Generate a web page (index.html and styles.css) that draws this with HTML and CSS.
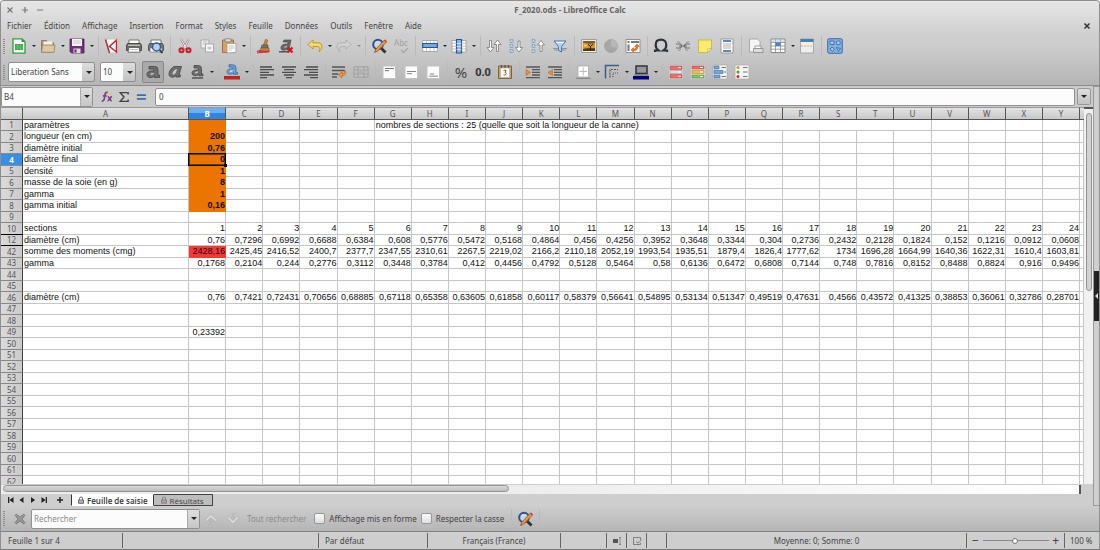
FILE: index.html
```html
<!DOCTYPE html>
<html lang="fr">
<head>
<meta charset="utf-8">
<title>F_2020.ods - LibreOffice Calc</title>
<link rel="stylesheet" href="styles.css">
</head>
<body>
<div class="window">
  <header class="chrome">
    <div class="titlebar">
      <div class="winbtns">
        <button aria-label="Fermer la fenêtre"><svg viewBox="0 0 8 8"><path d="M1.500 1.500l5 5M6.500 1.500l-5 5"/></svg></button>
        <button aria-label="Agrandir"><svg viewBox="0 0 8 8"><path d="M4 1v6M1 4h6"/></svg></button>
        <button aria-label="Réduire"><svg viewBox="0 0 8 8"><path d="M1 4h6"/></svg></button>
      </div>
      <h1>F_2020.ods - LibreOffice Calc</h1>
    </div>
    <nav class="menubar">
      <button>Fichier</button><button>Édition</button><button>Affichage</button><button>Insertion</button><button>Format</button><button>Styles</button><button>Feuille</button><button>Données</button><button>Outils</button><button>Fenêtre</button><button>Aide</button>
      <button class="closedoc" aria-label="Fermer le document"><svg viewBox="0 0 8 8"><path d="M1.500 1.500l5 5M6.500 1.500l-5 5"/></svg></button>
    </nav>

    <div class="toolbar standard">
      <div class="grip"></div>
      <button class="tb" aria-label="Nouveau"><svg viewBox="0 0 16 16"><path d="M2 .8h9l3 3v11.400H2z" fill="#fff" stroke="#2f9a3c" stroke-width="1.300"/><path d="M10.500 1l3.500 3h-3.500z" fill="#2f9a3c"/><path d="M4 6h8v6H4z" fill="#35a844"/><path d="M4 8h8M4 10h8M6.700 6v6M9.400 6v6" stroke="#8fd796" stroke-width=".5"/></svg></button><button class="dd" aria-label="Nouveau : options"></button>
      <button class="tb" aria-label="Ouvrir"><svg viewBox="0 0 16 16"><path d="M1.500 14V2.500h5l1 2h6V14z" fill="#b09a78" stroke="#87704e" stroke-width=".8"/><path d="M3.500 3.500h9v4h-9z" fill="#f2f2ee"/><path d="M1.500 14.300l1-7.300h12.500l-1 7.300z" fill="#dbc9a6" stroke="#957d59" stroke-width=".8"/></svg></button><button class="dd" aria-label="Ouvrir : options"></button>
      <button class="tb" aria-label="Enregistrer"><svg viewBox="0 0 16 16"><path d="M1 1h14v14H2.500L1 13.500z" fill="#70307c" stroke="#4b1b58" stroke-width=".8"/><path d="M3 1h10v7H3z" fill="#f5f3f5"/><path d="M4 3h8M4 5h8" stroke="#bbb" stroke-width=".7"/><path d="M4.500 10.500h7V15h-7z" fill="#ddd"/><path d="M5.500 11.500h2v3h-2z" fill="#5d2769"/></svg></button><button class="dd" aria-label="Enregistrer : options"></button>
      <span class="sep"></span>
      <button class="tb" aria-label="Exporter au format PDF"><svg viewBox="0 0 16 16"><path d="M2 1h12v14H4z" fill="#fafafa" stroke="#bbb" stroke-width=".8"/><path d="M1.500 1.500L5.500 15M13 1.500L5.500 8.500l7 5.500V3" fill="none" stroke="#c8282d" stroke-width="1.500"/></svg></button>
      <button class="tb" aria-label="Imprimer"><svg viewBox="0 0 16 16"><path d="M3 2h10v4H3z" fill="#fff" stroke="#555" stroke-width=".8"/><path d="M1.500 5.500h13l1 2v5h-15v-5z" fill="#686b66" stroke="#363834" stroke-width=".8"/><path d="M2 7.200h12" stroke="#dfe5d8" stroke-width="1"/><path d="M3 9.500h10l1 4.700H2z" fill="#fff" stroke="#555" stroke-width=".8"/><path d="M4 11.500h8" stroke="#bbb"/></svg></button>
      <button class="tb" aria-label="Aperçu"><svg viewBox="0 0 16 16"><path d="M3 2h10v4H3z" fill="#fff" stroke="#555" stroke-width=".8"/><path d="M1.500 5.500h13l1 2v5h-15v-5z" fill="#747873" stroke="#444" stroke-width=".8"/><path d="M2 10h12v4H2z" fill="#fff" stroke="#666" stroke-width=".6"/><path d="M11.500 12l3 3" stroke="#363a3d" stroke-width="2"/><circle cx="8.500" cy="9" r="4" fill="#b5d0f2" stroke="#315da2" stroke-width="1.500"/></svg></button>
      <span class="sep"></span>
      <button class="tb" aria-label="Couper"><svg viewBox="0 0 16 16"><path d="M4 1l5.500 10M12 1L6.500 11" stroke="#888" stroke-width="2.200"/><path d="M4 1l5.500 10M12 1L6.500 11" stroke="#eee" stroke-width="1"/><circle cx="4.500" cy="12.300" r="2.100" fill="#e99" stroke="#cb1c24" stroke-width="1.900"/><circle cx="11.500" cy="12.300" r="2.100" fill="#e99" stroke="#cb1c24" stroke-width="1.900"/></svg></button>
      <button class="tb" aria-label="Copier"><svg viewBox="0 0 16 16"><path d="M2 2h8v8H2z" fill="#eee" stroke="#aaa"/><path d="M4 4h4M4 6h4" stroke="#bbb"/><path d="M6.500 6h8v8h-8z" fill="#fbfbfb" stroke="#a5a5a5"/><path d="M8.500 8.500h4v3h-4z" fill="#ccc"/></svg></button>
      <button class="tb" aria-label="Coller"><svg viewBox="0 0 16 16"><path d="M1.500 2h11v12.500h-11z" fill="#d7a25e" stroke="#987147"/><path d="M4 .8h6v3H4z" fill="#ddd" stroke="#777" stroke-width=".7"/><path d="M6 5.500h9v9l-9 .5z" fill="#fafafa" stroke="#999" stroke-width=".8"/><path d="M7.500 8h6M7.500 10h6M7.500 12h3" stroke="#bbb" stroke-width=".8"/></svg></button><button class="dd" aria-label="Coller : options"></button>
      <span class="sep"></span>
      <button class="tb" aria-label="Cloner le formatage"><svg viewBox="0 0 16 16"><path d="M9.500 1.500l2 .5-1 5h-3z" fill="#d48b45" stroke="#8a5729" stroke-width=".7"/><path d="M6 7h6v3H5z" fill="#777" stroke="#444" stroke-width=".6"/><path d="M5 10h8v3l-3 1H3z" fill="#c6833f" stroke="#85502a" stroke-width=".6"/><path d="M1 13.500c4-2 5 1 13-.5M1 15c5-1 7-1 12-1" fill="none" stroke="#d42d2a" stroke-width="1.200"/></svg></button>
      <button class="tb" aria-label="Effacer le formatage"><svg viewBox="0 0 16 16"><path d="M6 2h7l-2 10H9l.3-1.500C7 13.500 2 12.500 3 9c.5-2.500 3.500-3 6.700-3l.3-2H5z" fill="#686868" stroke="#444" stroke-width=".6"/><path d="M5.500 9.500l3.500-2-.5 2z" fill="#ccc"/><path d="M1 13.800h9" stroke="#555" stroke-width="1.500"/><path d="M9.500 9.500l5 5M14.500 9.500l-5 5" stroke="#c91c21" stroke-width="2.400"/></svg></button>
      <span class="sep"></span>
      <button class="tb" aria-label="Annuler"><svg viewBox="0 0 16 16"><path d="M.8 6.500L6 2v2.800h5c5.500 0 4.500 6.500 1 9 1.300-3.800.5-5.300-2-5.300H6V11z" fill="#f5db65" stroke="#b89421" stroke-width=".9"/></svg></button><button class="dd" aria-label="Annuler : options"></button>
      <button class="tb" aria-label="Rétablir" disabled><svg viewBox="0 0 16 16"><path d="M15.200 6.500L10 2v2.800H5c-5.500 0-4.500 6.500-1 9-1.300-3.800-.5-5.300 2-5.300h4V11z" fill="#d3d3d3" stroke="#aaa" stroke-width=".8"/></svg></button><button class="dd off" aria-label="Rétablir : options" disabled></button>
      <span class="sep"></span>
      <button class="tb" aria-label="Rechercher et remplacer"><svg viewBox="0 0 16 16"><circle cx="7" cy="6.500" r="4.800" fill="#c8d6e8" stroke="#2f4f8f" stroke-width="2"/><path d="M10.500 10.500l4 4" stroke="#333" stroke-width="2.800"/><path d="M3.500 14.500l1.300-3.300L13.500 2l2 2-9 9.200z" fill="#ee9a3c" stroke="#8f4c1b" stroke-width=".8"/><path d="M13 2.500l1-1.300 2 2-1 1.200z" fill="#cc474a"/></svg></button>
      <button class="tb abc" aria-label="Orthographe" disabled><span>Abc</span><svg viewBox="0 0 16 7"><path d="M8 3l2.500 2.500L15 1" fill="none" stroke="#aaa" stroke-width="1.500"/></svg></button>
      <span class="sep"></span>
      <button class="tb" aria-label="Ligne"><svg viewBox="0 0 16 16"><path d="M.7 2.500h14.600v11H.7z" fill="#fff" stroke="#999" stroke-width=".8"/><path d="M4.500 2.500v11M8.200 2.500v11M12 2.500v11" stroke="#aaa" stroke-width=".7"/><path d="M.7 5.500h14.600v4H.7z" fill="#78a8df" stroke="#245794" stroke-width="1.200"/></svg></button><button class="dd" aria-label="Ligne : options"></button>
      <button class="tb" aria-label="Colonne"><svg viewBox="0 0 16 16"><path d="M1 2.500h14v11.500H1z" fill="#fff" stroke="#999" stroke-width=".8"/><path d="M1 5.300h14M1 8.200h14M1 11h14" stroke="#aaa" stroke-width=".7"/><path d="M5.500 1.500h5v13.500h-5z" fill="#8db8e9" stroke="#245794" stroke-width="1.200"/><path d="M5.500 5.500h5M5.500 8.500h5M5.500 11.500h5" stroke="#fff" stroke-width=".6"/></svg></button><button class="dd" aria-label="Colonne : options"></button>
      <span class="sep"></span>
      <button class="tb" aria-label="Trier"><svg viewBox="0 0 16 16"><path d="M3.500 2.500h2v7h2.300L4.500 14 1 9.500h2.500zM10.500 13.500h2v-7H15L11.500 2 8 6.500h2.500z" fill="#fff" stroke="#777" stroke-width=".8"/></svg></button>
      <button class="tb" aria-label="Tri croissant"><svg viewBox="0 0 16 16"><path d="M10 3h2v6.500h2.500L11 14 7.500 9.500H10z" fill="#fff" stroke="#777" stroke-width=".8"/><path d="M2 1.500h3v3H2zM2 6.500h3v3H2zM2 11.500h3v3H2z" fill="#b9cfe6" stroke="#5e85b0" stroke-width=".8" stroke-dasharray="1 .7"/></svg></button>
      <button class="tb" aria-label="Tri décroissant"><svg viewBox="0 0 16 16"><path d="M10 13.500h2V7h2.500L11 2.500 7.500 7H10z" fill="#fff" stroke="#777" stroke-width=".8"/><path d="M2 1.500h3v3H2zM2 6.500h3v3H2zM2 11.500h3v3H2z" fill="#b9cfe6" stroke="#5e85b0" stroke-width=".8" stroke-dasharray="1 .7"/></svg></button>
      <button class="tb" aria-label="AutoFiltre"><svg viewBox="0 0 16 16"><path d="M1 10.500h14M2 12h12" stroke="#888" stroke-width=".8"/><path d="M2 3h12L9.500 8.500V14l-3-1.500v-4z" fill="#b6d2f1" stroke="#4677b0"/><path d="M4 4.300h8" stroke="#fff"/></svg></button>
      <span class="sep"></span>
      <button class="tb" aria-label="Image"><svg viewBox="0 0 16 16"><path d="M.7 1.500h14.600v13H.7z" fill="#eee" stroke="#8c8c86" stroke-width=".8"/><path d="M2 3h12v10H2z" fill="#d9982f"/><path d="M2 3h12v2l-5 1L2 4.500z" fill="#7d5d26"/><path d="M2 11c4-1.500 7 0 12-1V13H2z" fill="#4a3a18"/><path d="M9.500 12V8.500L7 6.500m2.500 2L12 6" fill="none" stroke="#2b2009" stroke-width="1"/><path d="M3 7.500h3" stroke="#f9d869" stroke-width="1.500"/></svg></button>
      <button class="tb" aria-label="Diagramme" disabled><svg viewBox="0 0 16 16"><circle cx="8" cy="8" r="6.500" fill="#a7a7a7" stroke="#999" stroke-width=".6"/><path d="M8 8V1.500A6.500 6.500 0 0 1 14 10z" fill="#b8b8b8"/></svg></button>
      <button class="tb" aria-label="Table dynamique"><svg viewBox="0 0 16 16"><path d="M1 1.500h14v13H1z" fill="#fff" stroke="#888" stroke-width=".9"/><path d="M2.500 3h2v2h-2zM6 3h8v2H6zM2.500 6.500h2V13h-2z" fill="#777"/><path d="M12 6l2.500 2.500h-1.700c0 3-1.300 4.200-4.300 4.300v1.500L6 12l2.500-2.500V11c2 0 2.500-.7 2.500-2.500H9.500z" fill="#ee7624" stroke="#b85316" stroke-width=".5"/></svg></button>
      <span class="sep"></span>
      <button class="tb" aria-label="Caractères spéciaux"><svg viewBox="0 0 16 16"><path d="M2 14v-1.500h3.500C3.500 11 2.700 9.300 2.700 7c0-3.500 2-5.300 5.300-5.300s5.300 1.800 5.300 5.300c0 2.300-.8 4-2.800 5.500H14V14" fill="none" stroke="#2e3436" stroke-width="2.200"/></svg></button>
      <button class="tb" aria-label="Hyperlien"><svg viewBox="0 0 16 16"><path d="M1 6h4.500l1.500 2-1.500 2H1M15 6h-4.500L9 8l1.500 2H15M4 8h8" fill="none" stroke="#6c6c6c" stroke-width="1.200"/><path d="M2 3.500l3 1M14 3.500l-3 1M3 12.500l3-1M13 12.500l-3-1" fill="none" stroke="#888" stroke-width=".8"/></svg></button>
      <button class="tb" aria-label="Annotation"><svg viewBox="0 0 16 16"><path d="M1.500 2h13v9l-4 3.500h-9z" fill="#f7ec6b" stroke="#c2b43a" stroke-width=".8"/><path d="M10.500 14.500l.3-3.700 3.700.2z" fill="#fffbd0" stroke="#b3a334" stroke-width=".6"/></svg></button>
      <button class="tb" aria-label="En-tête et pied de page"><svg viewBox="0 0 16 16"><path d="M2 1h12v14H2z" fill="#fff" stroke="#888" stroke-width=".8"/><path d="M4 3h8M4 13h8" stroke="#315f9b" stroke-width="1.700"/><path d="M4 6h8M4 8h8M4 10h8" stroke="#999" stroke-width=".8"/></svg></button>
      <span class="sep"></span>
      <button class="tb" aria-label="Zones d'impression"><svg viewBox="0 0 16 16"><path d="M1.500 1h8l2.500 2.500V14H1.500z" fill="#f5f5f5" stroke="#999" stroke-width=".8"/><path d="M7 8h6v3H7z" fill="#fff" stroke="#888" stroke-width=".8"/><path d="M5.500 10.500h9.500v4H5.500z" fill="#ddd" stroke="#888" stroke-width=".8"/></svg></button>
      <button class="tb" aria-label="Fixer lignes et colonnes"><svg viewBox="0 0 16 16"><path d="M1 1h14v13.500H1z" fill="#fff" stroke="#888"/><path d="M1 4.500h14M1 8h14M1 11.200h14M5.500 1v13.500M10.500 1v13.500" stroke="#888" stroke-width=".8"/><path d="M5.500 4.500h5V8h-5z" fill="#4f83bd"/><path d="M1.500 1.500h13v2.500h-13z" fill="#b8cde2" opacity=".6"/></svg></button><button class="dd" aria-label="Fixer : options"></button>
      <button class="tb" aria-label="Scinder la fenêtre"><svg viewBox="0 0 16 16"><path d="M1.500 1h13v14h-13z" fill="#eee" stroke="#999" stroke-width=".8"/><path d="M1.500 1h13v3h-13z" fill="#467eb5"/><path d="M2 8h12" stroke="#e9a65e" stroke-width="1.200" stroke-dasharray="2 1"/></svg></button>
      <span class="sep"></span>
      <button class="tb" aria-label="Fonctions de dessin"><svg viewBox="0 0 16 16"><rect x=".7" y=".7" width="14.600" height="14.600" rx="1.500" fill="#82aee0" stroke="#3c6da8"/><path d="M3 3h4v3.500H3zM9.500 9.500l4 1-2 3zM3 11l2-2 2.500 2L5.500 13.500z" fill="#a9c8eb" stroke="#315f9b" stroke-width=".8"/><circle cx="11.300" cy="4.800" r="2" fill="#a9c8eb" stroke="#315f9b" stroke-width=".8"/></svg></button>
    </div>

    <div class="toolbar formatting">
      <div class="grip"></div>
      <div class="combo fontname"><select aria-label="Nom de police"><option>Liberation Sans</option></select></div>
      <div class="combo fontsize"><select aria-label="Taille de police"><option>10</option></select></div>
      <span class="sep"></span>
      <button class="tb pressed" aria-label="Gras" aria-pressed="true"><svg viewBox="0 0 16 16"><path d="M4 2.500h5.500q3.500 0 3.500 3V11h1.500v2.500h-5V12C7 14.300 2 14 2 10.500 2 7.500 5 6.800 9 7c0-1.500-.5-2-2-2H4z" fill="#6d6d6d" stroke="#444" stroke-width=".8"/><path d="M5.500 10.300c0-1.300 1.500-1.500 3.500-1.300-.5 2-3.500 3-3.500 1.300z" fill="#bbb"/></svg></button>
      <button class="tb" aria-label="Italique"><svg viewBox="0 0 16 16"><path d="M7 2.500h7.500L12 11h1.500l-.5 2H9l.3-1.500C7 14 1.500 14 2 9.500 2.500 5 7 2.500 7 2.500z" fill="#6d6d6d" stroke="#444" stroke-width=".8"/><path d="M5.500 10c0-3 2.500-4.500 4.500-5C9.500 8 7.500 12 5.500 10z" fill="#c6c6c6"/></svg></button>
      <button class="tb" aria-label="Souligné"><svg viewBox="0 0 16 16"><path d="M5 1.500h4q3.500 0 3.500 3V10H14v1.800h-4V10.500C7 12.500 3 12 3 9c0-2.500 3-3 6.500-3 0-1.500-.5-2-2-2H5z" fill="#6d6d6d" stroke="#444" stroke-width=".8"/><path d="M5.800 8.800c0-1 1.500-1.300 3.700-1.200-.5 2-3.700 2.500-3.700 1.200z" fill="#c6c6c6"/><path d="M3 14h11" stroke="#555" stroke-width="1.600"/></svg></button><button class="dd" aria-label="Souligné : options"></button>
      <span class="sep"></span>
      <button class="tb" aria-label="Couleur de police"><svg viewBox="0 0 16 16"><path d="M5 .8h3.500q3.500 0 3.500 3V8.500h1.500v1.800h-4V9C7 11 3 10.500 3 7.700 3 5.300 6 4.800 9 4.800c0-1.300-.5-1.700-1.700-1.700H5z" fill="#71a0d7" stroke="#34639d" stroke-width=".8"/><path d="M5.700 7.300c0-1 1.500-1.200 3.300-1.100-.3 1.800-3.300 2.300-3.300 1.100z" fill="#cedaea"/><path d="M0 12h16v3.500H0z" fill="#c9211e"/></svg></button><button class="dd" aria-label="Couleur de police : options"></button>
      <span class="sep"></span>
      <button class="tb" aria-label="Aligner à gauche"><svg viewBox="0 0 16 16"><path d="M1 3h12M1 5.700h14M1 8.300h9M1 11h14M1 13.700h7" stroke="#4b4b4b" stroke-width="1.300"/></svg></button>
      <button class="tb" aria-label="Centrer"><svg viewBox="0 0 16 16"><path d="M1 3h14M3 5.700h10M1 8.300h14M3 11h10M5 13.700h6" stroke="#4b4b4b" stroke-width="1.300"/></svg></button>
      <button class="tb" aria-label="Aligner à droite"><svg viewBox="0 0 16 16"><path d="M3 3h12M1 5.700h14M6 8.300h9M1 11h14M7 13.700h8" stroke="#4b4b4b" stroke-width="1.300"/></svg></button>
      <span class="sep"></span>
      <button class="tb" aria-label="Renvoyer à la ligne"><svg viewBox="0 0 16 16"><path d="M1 3h13M1 6.500h13M1 10h6M1 13h5" stroke="#555" stroke-width="1.300"/><path d="M14 6.500c2 3 0 5-3 5v2.500L7 10.500 11 8v2c2 0 2.700-1.200 2-3z" fill="#ee9a4a" stroke="#bb6323" stroke-width=".7"/></svg></button>
      <button class="tb" aria-label="Fusionner les cellules" disabled><svg viewBox="0 0 16 16"><path d="M1 3h14v10H1zM1 6h14M1 10h14M5 3v3M11 3v3M5 10v3M11 10v3M3 8h10" fill="#c7c7c7" stroke="#999" stroke-width="1"/></svg></button>
      <span class="sep"></span>
      <button class="tb" aria-label="Aligner en haut"><svg viewBox="0 0 16 16"><rect x="2" y="2" width="12.500" height="12.500" rx="1" fill="#fcfcfc" stroke="#c2c2c2"/><path d="M4 4.500h9M4 6.700h4" stroke="#666" stroke-width=".9"/></svg></button>
      <button class="tb" aria-label="Centrer verticalement"><svg viewBox="0 0 16 16"><rect x="2" y="2" width="12.500" height="12.500" rx="1" fill="#fcfcfc" stroke="#c2c2c2"/><path d="M4 7.500h9M4 9.700h5" stroke="#777" stroke-width=".9"/></svg></button>
      <button class="tb" aria-label="Aligner en bas"><svg viewBox="0 0 16 16"><rect x="2" y="2" width="12.500" height="12.500" rx="1" fill="#fcfcfc" stroke="#c2c2c2"/><path d="M5 10h4M4 12.200h9" stroke="#777" stroke-width=".9"/></svg></button>
      <span class="sep"></span>
      <button class="tb percent">%</button>
      <button class="tb number">0.0</button>
      <button class="tb" aria-label="Format date"><svg viewBox="0 0 16 16"><path d="M1.500 2h13v12.500h-13z" fill="#c6a060" stroke="#846333"/><path d="M3.500 4h9v9.500h-9z" fill="#faf8f0" stroke="#aaa" stroke-width=".5"/><path d="M4.500 1v3M8 1v3M11.500 1v3" stroke="#555" stroke-width="1.200"/><path d="M6.500 6.300h2.700L8 8.500c2 0 1.700 2.800-1.500 2.500" fill="none" stroke="#666" stroke-width="1"/></svg></button>
      <span class="sep"></span>
      <button class="tb" aria-label="Augmenter le retrait"><svg viewBox="0 0 16 16"><path d="M1 3h14M7 5.700h8M7 8.300h8M7 11h8M1 13.700h14" stroke="#555" stroke-width="1.300"/><path d="M1 5.500l4.500 3L1 11.500z" fill="#ef8c3a" stroke="#b85c1c" stroke-width=".5"/></svg></button>
      <button class="tb" aria-label="Diminuer le retrait"><svg viewBox="0 0 16 16"><path d="M1 3h14M7 5.700h8M7 8.300h8M7 11h8M1 13.700h14" stroke="#555" stroke-width="1.300"/><path d="M5.500 5.500l-4.500 3 4.500 3z" fill="#ef8c3a" stroke="#b85c1c" stroke-width=".5"/></svg></button>
      <span class="sep"></span>
      <button class="tb" aria-label="Bordures"><svg viewBox="0 0 16 16"><path d="M3 2h10.500v11H3z" fill="#fff" stroke="#aaa" stroke-width=".8"/><path d="M8.200 3.500v8M4.500 7.500H12" stroke="#a9bfd8" stroke-width="1"/><path d="M1 14.300h14.500" stroke="#888" stroke-width="1.200"/></svg></button><button class="dd" aria-label="Bordures : options"></button>
      <button class="tb" aria-label="Style de bordure"><svg viewBox="0 0 16 16"><path d="M1.500 14.500V1.500H15" fill="none" stroke="#3e5f7d" stroke-width="1.500"/><path d="M6 13.500V5.500h8" fill="none" stroke="#555" stroke-width="1.200" stroke-dasharray="2 1"/><path d="M9 13V9h6" fill="none" stroke="#555" stroke-width="1" stroke-dasharray="1 1"/></svg></button><button class="dd" aria-label="Style de bordure : options"></button>
      <button class="tb" aria-label="Couleur de bordure"><svg viewBox="0 0 16 16"><path d="M3 2h11v7.500H3z" fill="#999" stroke="#333" stroke-width="1.500"/><path d="M1 11h14.500" stroke="#666"/><path d="M0 12h16v3.500H0z" fill="#000080"/></svg></button><button class="dd" aria-label="Couleur de bordure : options"></button>
      <span class="sep"></span>
      <button class="tb" aria-label="Condition"><svg viewBox="0 0 16 16"><path d="M1 1h14v14H1z" fill="#eee" stroke="#bbb" stroke-width=".7"/><path d="M2 2h12v3.500H2zM2 10.500h12V14H2z" fill="#ee6b6b" stroke="#c13d3d" stroke-width=".6"/><path d="M2 6.500h12v3H2z" fill="#ddd" stroke="#999" stroke-width=".6"/><path d="M10 3.700h3M10 8h3M10 12.300h3" stroke="#fff"/></svg></button>
      <button class="tb" aria-label="Échelle de couleurs"><svg viewBox="0 0 16 16"><path d="M1 1h14v14H1z" fill="#eee" stroke="#bbb" stroke-width=".7"/><path d="M2 2h12v3H2z" fill="#e6726b" stroke="#c13d3d" stroke-width=".6"/><path d="M2 6.500h12v3H2z" fill="#edbd53" stroke="#b78925" stroke-width=".6"/><path d="M2 11h12v3H2z" fill="#80c369" stroke="#4a8e34" stroke-width=".6"/><path d="M10 3.500h3M10 8h3M10 12.500h3" stroke="#fff"/></svg></button>
      <button class="tb" aria-label="Barre de données"><svg viewBox="0 0 16 16"><path d="M1 1h14v14H1z" fill="#f4f4f4" stroke="#aaa" stroke-width=".7"/><path d="M2 2h5v3H2zM2 6.500h9v3H2zM2 11h6v3H2z" fill="#77a4da" stroke="#3a6ba6" stroke-width=".6"/><path d="M9.500 3.500H14M12 8h2M9.500 12.500H14" stroke="#777" stroke-width="1.100"/></svg></button>
      <button class="tb" aria-label="Jeu d'icônes"><svg viewBox="0 0 16 16"><path d="M1 1h14v14H1z" fill="#f4f4f4" stroke="#aaa" stroke-width=".7"/><circle cx="4" cy="3.500" r="1.500" fill="#df952e"/><circle cx="4" cy="8" r="1.500" fill="#4d9b39"/><circle cx="4" cy="12.500" r="1.500" fill="#cd2a2a"/><path d="M9 3.500h4.500M9 8h4.500M9 12.500h4.500" stroke="#777" stroke-width="1.100"/></svg></button>
    </div>
  </header>

  <main class="work">
    <section class="document">
      <div class="formulabar">
        <div class="field namebox"><input aria-label="Zone de nom" value="B4"><button aria-label="Choisir un nom"></button></div>
        <button class="fb" aria-label="Assistant Fonctions"><svg viewBox="0 0 16 16"><path d="M9 2C6 1 5.500 3 5 7s-1 7-4 6M2.500 6.500h5M9 7.500c2 0 3 6 5.500 5.500M14.500 7.500c-2 0-3.500 6-6 5.500" fill="none" stroke="#7b4088" stroke-width="2.200"/><path d="M12 0l.8 2.200L15 3l-2.200.8L12 6l-.8-2.200L9 3l2.200-.8z" fill="#f2ca3b"/></svg></button>
        <button class="fb" aria-label="Somme"><svg viewBox="0 0 16 16"><path d="M13.500 4.500V2.200H3l5 5.800-5 5.800h10.500v-2.500" fill="none" stroke="#444" stroke-width="1.900"/></svg></button>
        <button class="fb" aria-label="Formule"><svg viewBox="0 0 16 16"><path d="M2.500 5.500h12M2.500 10.500h12" stroke="#3c6da8" stroke-width="2.600"/></svg></button>
        <input class="formula" aria-label="Ligne de saisie" value="0">
        <button class="expand" aria-label="Développer la barre de formule"></button>
      </div>
      <div class="sheetarea">
        <div class="sheet"><table class="grid" id="grid"></table></div>
        <div class="vscroll"><div class="vthumb"></div></div>
      </div>
      <div class="hscroll"><div class="htrack"><div class="hthumb"></div></div></div>
      <div class="tabs">
        <button class="nav" aria-label="Première feuille"><svg viewBox="0 0 8 8"><path d="M1 1h1.300v6H1zM6.500 1v6L2.500 4z"/></svg></button>
        <button class="nav" aria-label="Feuille précédente"><svg viewBox="0 0 8 8"><path d="M5.500 1v6L1.500 4z"/></svg></button>
        <button class="nav" aria-label="Feuille suivante"><svg viewBox="0 0 8 8"><path d="M2 1v6l4-3z"/></svg></button>
        <button class="nav" aria-label="Dernière feuille"><svg viewBox="0 0 8 8"><path d="M1.500 1v6l4-3zM5.700 1H7v6H5.700z"/></svg></button>
        <button class="nav add" aria-label="Ajouter une feuille"><svg viewBox="0 0 8 8"><path d="M3.300 1h1.400v2.300H7v1.400H4.700V7H3.300V4.700H1V3.300h2.300z"/></svg></button>
        <button class="tab active"><svg viewBox="0 0 8 8"><path d="M2.500 4V2.500a1.500 1.500 0 0 1 3 0V4M1.500 4h5v3.300h-5zM3 4.500V7M5 4.500V7" fill="none" stroke="#444" stroke-width=".8"/></svg>Feuille de saisie</button><button class="tab"><svg viewBox="0 0 8 8"><path d="M2.500 4V2.500a1.500 1.500 0 0 1 3 0V4M1.500 4h5v3.300h-5zM3 4.500V7M5 4.500V7" fill="none" stroke="#777" stroke-width=".8"/></svg>Résultats</button>
      </div>
    </section>
    <aside class="sidebar"><button aria-label="Afficher le volet latéral"></button></aside>
  </main>

  <div class="findbar">
    <div class="grip"></div>
    <button class="fclose" aria-label="Fermer la recherche"><svg viewBox="0 0 16 16"><path d="M3 1.500l5 4 5-4 1.500 1.500-4 5 4 5-1.500 1.500-5-4-5 4L1.500 13l4-5-4-5z" fill="#999" stroke="#666"/></svg></button>
    <div class="field search"><input aria-label="Rechercher" placeholder="Rechercher"><button aria-label="Historique"></button></div>
    <button class="arrow" aria-label="Précédent" disabled><svg viewBox="0 0 16 16"><path d="M8 3l6 6-1.500 1.500L8 6.500l-4.500 4L2 9zM7 9h2v1.500H7zM7 12h2v1.500H7z" fill="#dadada" stroke="#aaa" stroke-width=".6"/></svg></button>
    <button class="arrow" aria-label="Suivant" disabled><svg viewBox="0 0 16 16"><path d="M8 13L2 7l1.500-1.500L8 9.500l4.500-4L14 7zM7 5.500h2V7H7zM7 2.500h2V4H7z" fill="#dadada" stroke="#aaa" stroke-width=".6"/></svg></button>
    <button class="findall" disabled>Tout rechercher</button>
    <label class="check"><input type="checkbox">Affichage mis en forme</label>
    <label class="check"><input type="checkbox">Respecter la casse</label>
    <span class="sep"></span>
    <button class="tb" aria-label="Rechercher et remplacer"><svg viewBox="0 0 16 16"><circle cx="7" cy="6.500" r="4.800" fill="#c8d6e8" stroke="#2f4f8f" stroke-width="2"/><path d="M10.500 10.500l4 4" stroke="#333" stroke-width="2.800"/><path d="M3.500 14.500l1.300-3.300L13.500 2l2 2-9 9.200z" fill="#ee9a3c" stroke="#8f4c1b" stroke-width=".8"/><path d="M13 2.500l1-1.300 2 2-1 1.200z" fill="#cc474a"/></svg></button>
    <span class="sep"></span>
  </div>

  <footer class="status">
    <div class="s-sheet">Feuille 1 sur 4</div>
    <div class="s-sel"></div>
    <div class="s-style">Par défaut</div>
    <div class="s-lang">Français (France)</div>
    <div class="s-gap"></div>
    <div class="s-icon"><svg viewBox="0 0 10 10"><path d="M1 3h5v4H1z" fill="#555"/><path d="M7 1.500h2M8 1.500v7M7 8.500h2" stroke="#777" stroke-width=".8"/></svg></div>
    <div class="s-icon"><svg viewBox="0 0 10 10"><path d="M8.500 4V1.500h-7v7h7V7M4 5.500l2 1.500L9.500 4" fill="none" stroke="#777" stroke-width=".9"/></svg></div>
    <div class="s-icon"></div>
    <div class="s-sum">Moyenne: 0; Somme: 0</div>
    <div class="s-zoom"><button aria-label="Zoom arrière">−</button><input type="range" aria-label="Zoom" min="0" max="100" value="49"><button aria-label="Zoom avant">+</button></div>
    <div class="s-pct">100 %</div>
  </footer>
</div>
<script src="grid.js"></script>
</body>
</html>
```
FILE: grid.js
```js
const columns = 'ABCDEFGHIJKLMNOPQRSTUVWXY'.split('');
const rowNumbers = [1, 2, 3, 4, 5, 6, 7, 8, 9, 10, 12, 42];
for (let n = 43; n <= 62; n++) rowNumbers.push(n);

const labels = {
  1: 'paramètres', 2: 'longueur (en cm)', 3: 'diamètre initial', 4: 'diamètre final',
  5: 'densité', 6: 'masse de la soie (en g)', 7: 'gamma', 8: 'gamma initial',
  10: 'sections', 12: 'diamètre (cm)', 42: 'somme des moments (cmg)', 43: 'gamma', 46: 'diamètre (cm)'
};

const values = {
  2: ['200'], 3: ['0,76'], 4: ['0'], 5: ['1'], 6: ['8'], 7: ['1'], 8: ['0,16'],
  10: Array.from({ length: 24 }, (_, i) => String(i + 1)),
  12: '0,76 0,7296 0,6992 0,6688 0,6384 0,608 0,5776 0,5472 0,5168 0,4864 0,456 0,4256 0,3952 0,3648 0,3344 0,304 0,2736 0,2432 0,2128 0,1824 0,152 0,1216 0,0912 0,0608'.split(' '),
  42: '2428,16 2425,45 2416,52 2400,7 2377,7 2347,55 2310,61 2267,5 2219,02 2166,2 2110,18 2052,19 1993,54 1935,51 1879,4 1826,4 1777,62 1734 1696,28 1664,99 1640,36 1622,31 1610,4 1603,81'.split(' '),
  43: '0,1768 0,2104 0,244 0,2776 0,3112 0,3448 0,3784 0,412 0,4456 0,4792 0,5128 0,5464 0,58 0,6136 0,6472 0,6808 0,7144 0,748 0,7816 0,8152 0,8488 0,8824 0,916 0,9496'.split(' '),
  46: '0,76 0,7421 0,72431 0,70656 0,68885 0,67118 0,65358 0,63605 0,61858 0,60117 0,58379 0,56641 0,54895 0,53134 0,51347 0,49519 0,47631 0,4566 0,43572 0,41325 0,38853 0,36061 0,32786 0,28701'.split(' '),
  49: ['0,23392']
};

function cell(tag, text, className) {
  const el = document.createElement(tag);
  if (text) el.textContent = text;
  if (className) el.className = className;
  return el;
}

const grid = document.getElementById('grid');
const head = grid.createTHead().insertRow();
head.append(cell('th', '', 'corner'));
columns.forEach(name => {
  const classes = name === 'A' ? 'first' : name === 'B' ? 'current' : '';
  head.append(cell('th', name, classes));
});
head.append(cell('th', '', 'last'));

const body = grid.createTBody();
rowNumbers.forEach(n => {
  const row = body.insertRow();
  let headClass = n === 4 ? 'current' : '';
  if (n === 10 || n === 12) headClass = 'hidden-below';
  row.append(cell('th', String(n), headClass));
  row.append(cell('td', labels[n], 'label'));
  for (let c = 0; c < 24; c++) {
    if (n === 1 && c === 5) {
      const merged = cell('td', 'nombres de sections : 25 (quelle que soit la longueur de la canne)', 'label');
      merged.colSpan = 15;
      row.append(merged);
      c += 14;
      continue;
    }
    let className = '';
    if (c === 0 && n <= 8) className = n === 4 ? 'param cursor' : 'param';
    if (c === 0 && n === 42) className = 'alert';
    row.append(cell('td', values[n] && values[n][c], className));
  }
  row.append(cell('td', ''));
});
```
FILE: styles.css
```css
* { box-sizing: border-box; }
body {
  margin: 0;
  background: #fff;
  font: 8px/12px "Noto Sans", sans-serif;
  color: #444;
}
button, input, select { font: inherit; color: inherit; margin: 0; padding: 0; }
button { background: none; border: 0; flex: none; }
svg { display: block; }

.window {
  height: 100vh;
  display: flex;
  flex-direction: column;
  background: #cecece;
  border: 1px solid #8f8f8f;
  border-bottom-color: #777;
  border-radius: 4px 4px 0 0;
  overflow: hidden;
}
.chrome {
  background: linear-gradient(#e6e6e6, #cecece 36px, #cdcdcd 44px, #b5b5b5);
  border-bottom: 1px solid #8c8c8c;
}

.titlebar { display: grid; grid-template-columns: 1fr auto 1fr; height: 17px; align-items: center; }
.titlebar h1 { margin: 0; font-size: 8px; font-weight: 700; color: #666; padding-left: 40px; }
.winbtns { display: flex; gap: 7px; padding-left: 5px; }
.winbtns svg { width: 8px; height: 8px; fill: none; stroke: #777; stroke-width: 1.200; }
.menubar { display: flex; align-items: center; gap: 12px; height: 15px; padding: 0 8px 0 6px; }
.closedoc { margin-left: auto; }
.closedoc svg { width: 8px; height: 8px; fill: none; stroke: #333; stroke-width: 1.500; }

.toolbar { display: flex; align-items: center; height: 26px; }
.grip {
  width: 2px;
  height: 15px;
  margin: 0 3px 0 2px;
  flex: none;
  background: repeating-linear-gradient(#8d8d8d 0 1px, transparent 1px 2px);
}
.tb { width: 22px; height: 22px; display: flex; align-items: center; justify-content: center; }
.tb svg { width: 16px; height: 16px; }
.dd { width: 7px; height: 22px; display: flex; align-items: center; justify-content: center; }
.dd::after, .combo::after, .field button::after, .expand::after {
  content: "";
  border: 2px solid transparent;
  border-top-color: #222;
  border-bottom-width: 0;
}
.dd.off::after { border-top-color: #888; }
.sep { width: 6px; height: 20px; flex: none; background: linear-gradient(#bababa, #bababa) center / 1px 100% no-repeat; }
.standard .sep:nth-of-type(even) { width: 7px; }
.pressed { background: #a9a9a9; border: 1px solid #858585; border-radius: 2px; }
.abc { flex-direction: column; color: #a0a0a0; line-height: 8px; }
.abc svg { width: 16px; height: 7px; }
.percent { font-size: 15px; color: #444; }
.number { font-size: 11px; font-weight: 700; color: #333; }

.combo { position: relative; height: 20px; flex: none; }
.combo select {
  appearance: none;
  width: 100%;
  height: 100%;
  padding: 0 2px;
  border: 1px solid #8f8f8f;
  border-radius: 2px;
  background: linear-gradient(90deg, #fcfcfc, #fcfcfc) left / calc(100% - 12px) 100% no-repeat, linear-gradient(#dedede, #c3c3c3);
}
.combo::after { position: absolute; right: 3px; top: 9px; pointer-events: none; }
.combo::after, .field button::after, .expand::after { border-width: 3px 3px 0; }
.fontname { width: 87px; margin-right: 5px; }
.fontsize { width: 36px; }

.work { flex: 1; min-height: 0; display: flex; }
.document { flex: 1; min-width: 0; display: flex; flex-direction: column; }
.sidebar { width: 6px; display: flex; flex-direction: column; justify-content: center; border: 1px solid #999; border-right: 0; background: #cfcfcf; }
.sidebar button { height: 50px; background: #222; display: flex; align-items: center; justify-content: center; }
.sidebar button::after { content: ""; border: 3px solid transparent; border-right-color: #ddd; border-left-width: 0; }

.formulabar { display: flex; align-items: center; height: 21px; padding-right: 2px; background: #cbcbcb; }
.field { display: flex; height: 20px; border: 1px solid #919191; border-radius: 2px; background: #fcfcfc; }
.field input { flex: 1; min-width: 0; border: 0; padding: 0 2px; background: none; }
.field button { width: 12px; display: flex; align-items: center; justify-content: center; background: linear-gradient(#dedede, #c6c6c6); border-left: 1px solid #aaa; }
.namebox { width: 92px; margin-right: 5px; }
.fb { width: 17px; display: flex; justify-content: center; }
.fb svg { width: 12px; height: 12px; }
.formula { flex: 1; min-width: 0; height: 18px; margin: 0 2px 0 6px; padding: 0 3px; border: 1px solid #919191; border-radius: 2px; background: #fcfcfc; }
.expand { width: 14px; height: 17px; display: flex; align-items: center; justify-content: center; border: 1px solid #999; border-radius: 2px; background: linear-gradient(#dedede, #c3c3c3); }

.sheetarea { flex: 1; min-height: 0; display: flex; }
.sheet { flex: 1; min-width: 0; overflow: hidden; background: #fff; }
.grid {
  width: 100%;
  table-layout: fixed;
  border-collapse: separate;
  border-spacing: 0;
  font: 9px/11px "Liberation Sans", Arial, sans-serif;
  color: #111;
}
.grid th, .grid td { padding: 0; height: 12px; white-space: nowrap; }
.grid tbody tr:nth-child(odd) > * { height: 11px; line-height: 10px; }
.grid th { font: 8px/11px "Noto Sans", sans-serif; color: #555; }
.grid thead th {
  height: 13px;
  line-height: 11px;
  background: linear-gradient(#e2e2e2, #c9c9c9);
  border-top: 1px solid #999;
  border-right: 1px solid #555;
  border-bottom: 1px solid #555;
}
.grid tbody th { background: linear-gradient(90deg, #dadada, #cbcbcb); border-bottom: 1px solid #888; border-right: 1px solid #444; }
.grid .corner { width: 22px; }
.grid .first { width: 166px; }
.grid .last { width: 4px; border-right: 0; }
.grid thead .current { background: linear-gradient(#6cb0f3 50%, #2f86e2 50%); color: #fff; font-weight: 700; }
.grid tbody .current { background: #3a8ee6; color: #fff; font-weight: 700; }
.grid tbody .hidden-below { border-bottom-color: #000; }
.grid td { text-align: right; border-right: 1px solid #c6c6c6; border-bottom: 1px solid #c6c6c6; }
.grid td.label { text-align: left; padding-left: 1px; }
.grid td.param { background: #eb7500; border-color: #eb7500; font-weight: 700; }
.grid td.alert { background: #fb3434; border-color: #fb3434; }
.grid td.cursor { position: relative; }
.grid td.cursor::before { content: ""; position: absolute; inset: -1px; border: 1px solid #000; outline: 1px solid rgba(0, 0, 0, .5); outline-offset: -2px; }
.grid td.cursor::after { content: ""; position: absolute; right: -2px; bottom: -2px; width: 3px; height: 3px; background: #000; }

.vscroll { width: 9px; display: flex; padding: 4px 1px 0 2px; background: #f1f1f1; border-top: 2px solid #555; }
.vthumb { flex: 1; height: 48%; border: 1px solid #929292; border-radius: 4px; background: #d2d2d2; }
.hscroll { display: flex; height: 10px; padding: 1px 12px 0 0; background: #cecece; }
.htrack { flex: 1; padding-left: 2px; background: linear-gradient(90deg, #ececec 45%, #fff); border-right: 2px solid #555; }
.hthumb { width: 47%; height: 7px; border: 1px solid #929292; border-radius: 4px; background: linear-gradient(#dadada, #bdbdbd); }

.tabs { display: flex; height: 12px; padding-left: 4px; align-items: center; }
.nav { width: 11px; display: flex; justify-content: center; }
.nav svg { width: 8px; height: 8px; fill: #222; }
.nav.add { width: 22px; }
.tab { display: flex; align-items: center; gap: 2px; height: 12px; padding: 0 8px 0 6px; font: 8px/9px "Open Sans", sans-serif; border: 1px solid #444; background: #bdbdbd; }
.tab.active { padding: 0 5px; background: #fff; border-color: #fff #333 #fff #333; font-weight: 600; color: #333; }
.tab + .tab { border-left: 0; }
.tab svg { width: 8px; height: 8px; }

.findbar { display: flex; align-items: center; height: 26px; background: linear-gradient(#cdcdcd, #b5b5b5); border-bottom: 1px solid #808080; }
.fclose { width: 23px; display: flex; justify-content: center; }
.fclose svg { width: 12px; height: 12px; }
.search { width: 169px; }
.search input::placeholder { color: #8a8a8a; opacity: 1; }
.arrow { width: 22px; display: flex; justify-content: center; }
.arrow svg { width: 16px; height: 16px; }
.findall { margin: 0 8px 0 3px; color: #8c8c8c; }
.check { display: flex; align-items: center; gap: 4px; margin-right: 4px; white-space: nowrap; }
.check input { appearance: none; width: 11px; height: 11px; border: 1px solid #979797; border-radius: 2px; background: linear-gradient(#fafafa, #dedede); }

.status { display: flex; align-items: stretch; height: 17px; line-height: 16px; padding: 1px 0; white-space: nowrap; }
.status > div { border-right: 1px solid #666; flex: none; }
.status > .s-pct { border: 0; width: 34px; padding-left: 5px; }
.s-sheet { width: 122px; padding-left: 7px; }
.s-sel { width: 196px; }
.s-style { width: 109px; padding-left: 6px; }
.s-lang { width: 133px; text-align: center; }
.s-gap { width: 46px; }
.s-icon { width: 20px; display: flex; align-items: center; justify-content: center; }
.s-icon svg { width: 10px; height: 10px; }
.status > .s-sum { flex: 1; text-align: center; }
.s-zoom { width: 98px; display: flex; align-items: center; justify-content: space-between; padding: 0 5px; }
.s-zoom button { font-size: 12px; line-height: 12px; }
.s-zoom input { appearance: none; width: 66px; height: 8px; background: linear-gradient(#888, #888) center / 100% 1px no-repeat; }
.s-zoom input::-webkit-slider-thumb { appearance: none; width: 6px; height: 6px; border: 1px solid #777; border-radius: 50%; background: #fff; }
```
